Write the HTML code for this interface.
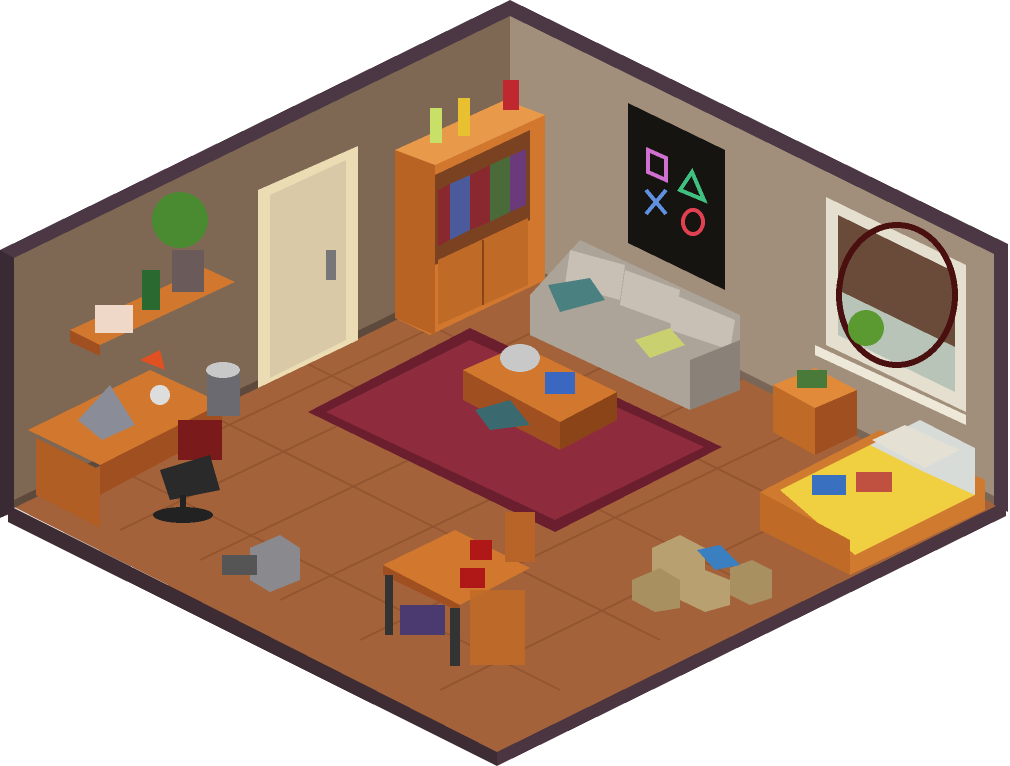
<!DOCTYPE html>
<html><head><meta charset="utf-8"><style>
html,body{margin:0;padding:0;background:#fff}
svg{display:block}
</style></head><body>
<svg width="1010" height="766" viewBox="0 0 1010 766" xmlns="http://www.w3.org/2000/svg" shape-rendering="crispEdges">
<polygon points="8,505 497,750 497,766 8,522" fill="#3e2c35"/>
<polygon points="497,750 1006,500 1006,516 497,766" fill="#4a3540"/>
<polygon points="12,506 510,262 1000,504 497,752" fill="#a3623a"/>
<g stroke="#8a4d2a" stroke-width="2" opacity="0.6">
<line x1="60" y1="506" x2="540" y2="276"/><line x1="120" y1="530" x2="600" y2="300"/>
<line x1="200" y1="560" x2="680" y2="330"/><line x1="280" y1="600" x2="760" y2="370"/>
<line x1="360" y1="640" x2="860" y2="400"/><line x1="440" y1="690" x2="930" y2="450"/>
<line x1="100" y1="460" x2="560" y2="690"/><line x1="200" y1="410" x2="660" y2="640"/>
<line x1="300" y1="360" x2="760" y2="590"/><line x1="400" y1="310" x2="860" y2="540"/>
</g>
<polygon points="0,250 510,0 1008,244 1008,512 994,505 994,254 510,16 14,258 14,512 0,518" fill="#4c3844"/>
<polygon points="0,250 14,258 14,512 0,518" fill="#3a2a33"/>
<polygon points="14,258 510,16 510,264 14,508" fill="#7f6853"/>
<polygon points="510,16 994,254 994,504 510,264" fill="#a18e7b"/>
<polygon points="14,500 510,256 510,264 14,508" fill="#5e4a3c"/>
<polygon points="510,256 994,496 994,504 510,264" fill="#7a6656"/>
<polygon points="308,412 470,328 722,447 555,532" fill="#6b1f2e"/>
<polygon points="326,412 470,340 704,447 555,520" fill="#8e2b3c"/>
<polygon points="258,190 358,146 358,340 258,388" fill="#ecdcb4"/>
<polygon points="270,195 346,160 346,340 270,378" fill="#d9c9a6"/>
<rect x="326" y="250" width="10" height="30" fill="#777"/>
<polygon points="395,150 505,100 545,115 545,280 430,335 395,318" fill="#d2782e"/>
<polygon points="395,150 505,100 545,115 435,165" fill="#e89a4a"/>
<polygon points="395,150 435,165 435,335 395,318" fill="#b86224"/>
<polygon points="435,175 530,130 530,220 435,265" fill="#7a4220"/>
<polygon points="438,190 450,184 450,240 438,246" fill="#8a2830"/>
<polygon points="450,184 470,175 470,230 450,240" fill="#4a5a9a"/>
<polygon points="470,175 490,165 490,222 470,230" fill="#8a2830"/>
<polygon points="490,165 510,156 510,212 490,222" fill="#4a6a3a"/>
<polygon points="510,156 526,149 526,205 510,212" fill="#6a3a7a"/>
<polygon points="438,260 528,218 528,285 438,325" fill="#c06a28"/>
<line x1="483" y1="240" x2="483" y2="305" stroke="#8a4418" stroke-width="2"/>
<rect x="430" y="108" width="12" height="35" fill="#c8e068"/><rect x="458" y="98" width="12" height="38" fill="#e8c030"/><rect x="503" y="80" width="16" height="30" fill="#c02830"/>
<polygon points="628,103 725,150 725,290 628,243" fill="#161410"/>
<polygon points="648,150 666,158 666,180 648,172" fill="none" stroke="#d070d0" stroke-width="4"/>
<polygon points="692,172 704,200 680,190" fill="none" stroke="#40c080" stroke-width="4"/>
<path d="M646 190 L666 214 M666 190 L646 214" stroke="#6090e0" stroke-width="4"/>
<ellipse cx="693" cy="222" rx="10" ry="12" fill="none" stroke="#e04050" stroke-width="4"/>
<polygon points="826,197 966,265 966,412 826,345" fill="#e4dfcf"/>
<polygon points="838,215 955,272 955,392 838,335" fill="#6a4a38"/>
<polygon points="838,290 955,347 955,392 838,335" fill="#b8c4b8"/>
<polygon points="815,345 966,415 966,425 815,355" fill="#eee8d8"/>
<ellipse cx="897" cy="295" rx="58" ry="70" fill="none" stroke="#4a1010" stroke-width="6"/>
<circle cx="866" cy="328" r="18" fill="#5a9a30"/>
<polygon points="530,295 580,240 740,315 740,390 690,410 530,335" fill="#aca498"/>
<polygon points="570,250 625,265 620,300 565,285" fill="#c8c0b4"/>
<polygon points="625,270 680,290 675,325 620,305" fill="#c8c0b4"/>
<polygon points="675,295 735,320 730,350 670,330" fill="#c8c0b4"/>
<polygon points="548,285 590,278 605,300 560,312" fill="#4a8080"/>
<polygon points="635,340 670,328 685,345 650,358" fill="#c8d070"/>
<polygon points="690,360 740,340 740,390 690,410" fill="#8a8278"/>
<polygon points="463,370 520,345 617,392 560,422" fill="#d2782e"/>
<polygon points="463,370 560,422 560,450 463,400" fill="#a05020"/>
<polygon points="560,422 617,392 617,420 560,450" fill="#8a4418"/>
<ellipse cx="520" cy="358" rx="20" ry="14" fill="#c8c8c8"/>
<rect x="545" y="372" width="30" height="22" fill="#3a68c0"/>
<polygon points="475,410 510,400 530,425 490,430" fill="#3a6a70"/>
<polygon points="773,385 815,368 857,390 815,408" fill="#e08a3a"/>
<polygon points="773,385 815,408 815,455 773,432" fill="#c06a28"/>
<polygon points="815,408 857,390 857,435 815,455" fill="#a05020"/>
<rect x="797" y="370" width="30" height="18" fill="#4a7a3a"/>
<polygon points="760,492 880,430 985,480 985,510 850,575 760,530" fill="#d07a30"/>
<polygon points="780,490 870,445 975,495 855,555" fill="#f0d040"/>
<polygon points="870,445 920,420 975,448 975,495 920,470" fill="#d8dcd8"/>
<polygon points="872,440 905,425 960,450 925,468" fill="#e4e0d4"/>
<rect x="812" y="475" width="34" height="20" fill="#3a70c0"/>
<rect x="856" y="472" width="36" height="20" fill="#c05040"/>
<polygon points="760,492 850,540 850,575 760,530" fill="#c06a28"/>
<polygon points="70,330 205,268 235,282 100,345" fill="#d2782e"/>
<polygon points="70,330 100,345 100,356 70,342" fill="#a05020"/>
<rect x="95" y="305" width="38" height="28" fill="#f0d8c8"/>
<rect x="142" y="270" width="18" height="40" fill="#2a6a30"/>
<rect x="172" y="250" width="32" height="42" fill="#6a5a5a"/>
<circle cx="180" cy="220" r="28" fill="#4a8a30"/>
<polygon points="28,430 150,370 222,403 100,465" fill="#d2782e"/>
<polygon points="36,438 100,470 100,528 36,495" fill="#b05e24"/>
<polygon points="100,465 222,403 222,430 100,495" fill="#a05020"/>
<polygon points="78,420 110,385 135,425 102,440" fill="#8a8c98"/>
<circle cx="160" cy="395" r="10" fill="#ddd"/>
<polygon points="140,360 160,350 165,370" fill="#e05020"/>
<rect x="207" y="368" width="33" height="48" fill="#6a6a70"/>
<ellipse cx="223" cy="370" rx="17" ry="8" fill="#c8c8c8"/>
<rect x="178" y="420" width="44" height="40" fill="#7a1a1a"/>
<polygon points="160,470 210,455 220,490 170,500" fill="#2a2a2a"/>
<rect x="180" y="495" width="6" height="20" fill="#222"/>
<ellipse cx="183" cy="515" rx="30" ry="8" fill="#222"/>
<polygon points="250,548 280,535 300,548 300,580 270,592 250,580" fill="#8a8a8e"/>
<rect x="222" y="555" width="35" height="20" fill="#555"/>
<polygon points="383,565 455,530 530,568 460,605" fill="#d2782e"/>
<polygon points="383,565 460,605 460,612 383,575" fill="#a05020"/>
<rect x="385" y="575" width="8" height="60" fill="#333"/>
<rect x="450" y="608" width="10" height="58" fill="#333"/>
<rect x="400" y="605" width="45" height="30" fill="#4a3a70"/>
<rect x="470" y="540" width="22" height="20" fill="#b01818"/>
<rect x="460" y="568" width="25" height="20" fill="#b01818"/>
<rect x="470" y="590" width="55" height="75" fill="#c06a28" opacity="0.9"/>
<rect x="505" y="512" width="30" height="50" fill="#b86428"/>
<polygon points="652,548 680,535 705,548 705,580 680,592 652,580" fill="#b8a070"/>
<polygon points="632,580 660,568 680,580 680,608 655,612 632,600" fill="#a89060"/>
<polygon points="680,580 705,570 730,580 730,605 705,612 680,600" fill="#b8a070"/>
<polygon points="730,568 752,560 772,570 772,598 750,605 730,595" fill="#a89060"/>
<polygon points="697,550 720,545 740,565 715,570" fill="#3a80c0"/>
</svg>
</body></html>
